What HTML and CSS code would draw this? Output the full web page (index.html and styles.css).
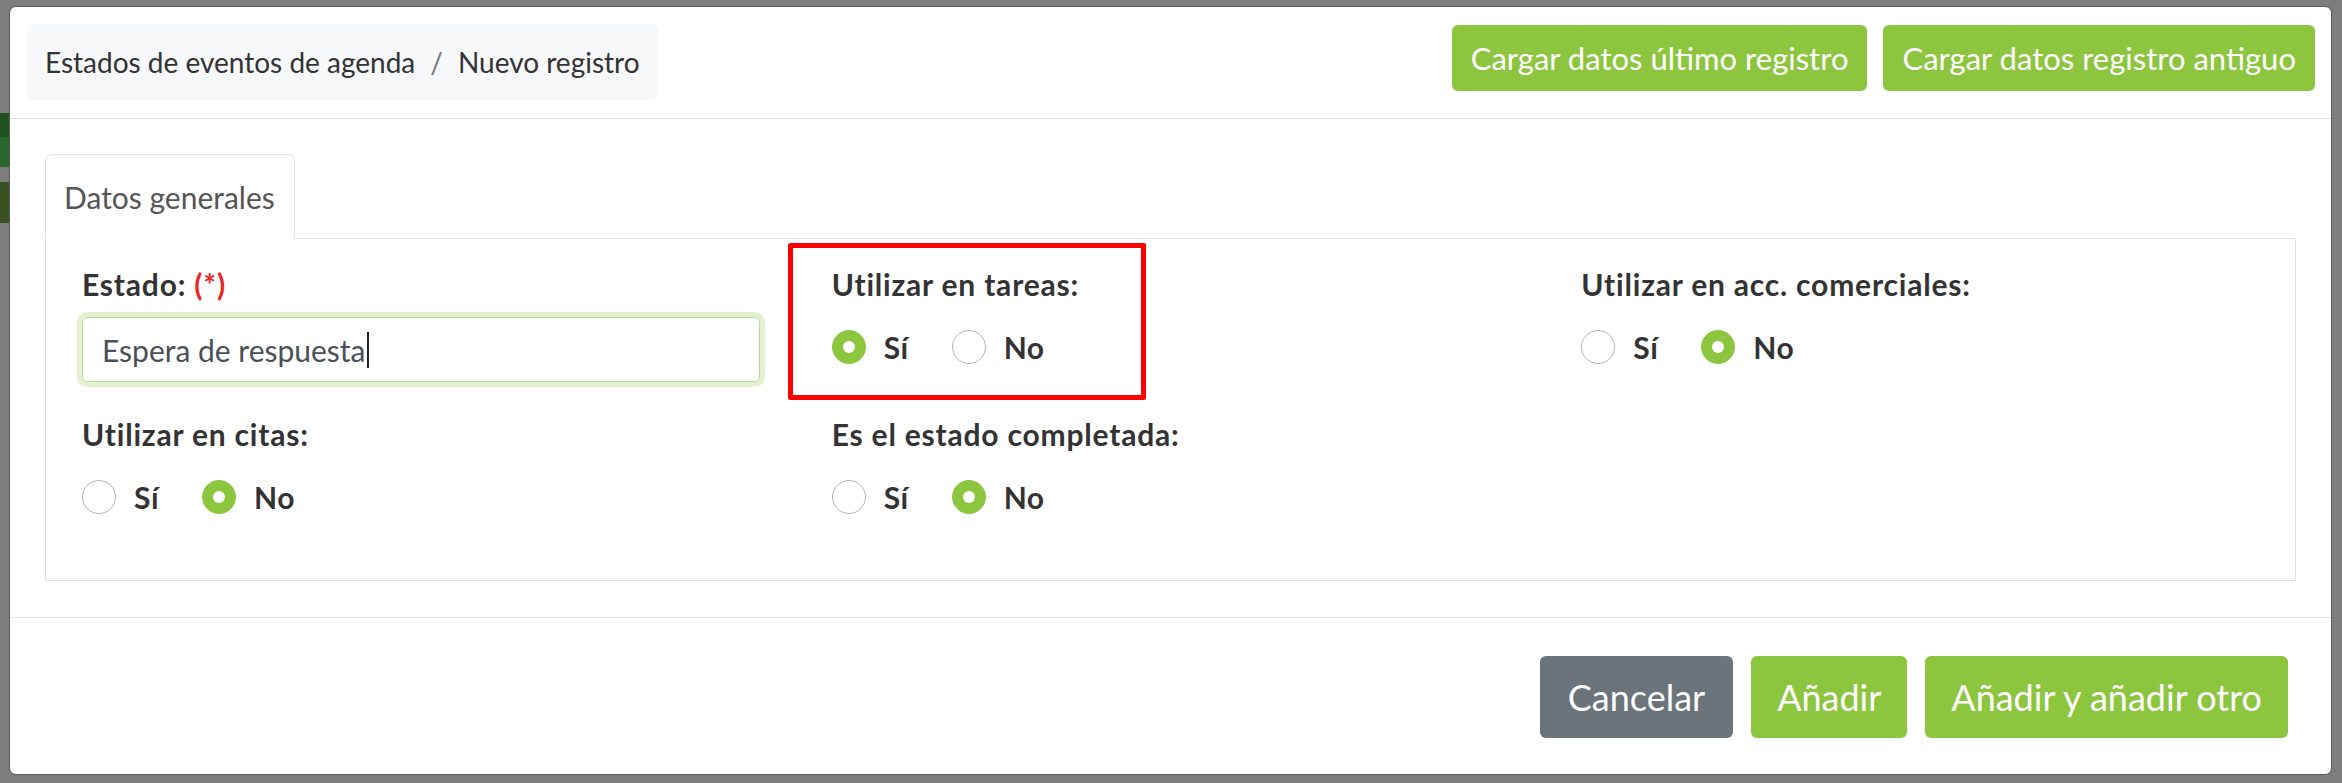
FILE: index.html
```html
<!DOCTYPE html>
<html lang="es">
<head>
<meta charset="utf-8">
<title>Nuevo registro</title>
<link rel="stylesheet" href="styles.css">
</head>
<body>
<div class="modal">
  <div class="modal-header">
    <nav class="crumbs">
      <span>Estados de eventos de agenda</span>
      <span class="sep">/</span>
      <span>Nuevo registro</span>
    </nav>
    <div class="header-actions">
      <button class="btn btn-green btn-top">Cargar datos último registro</button>
      <button class="btn btn-green btn-top">Cargar datos registro antiguo</button>
    </div>
  </div>
  <div class="modal-body">
    <div class="tabs">
      <div class="tab active">Datos generales</div>
    </div>
    <div class="tab-panel">
      <div class="field">
        <div class="label">Estado: <span class="req">(*)</span></div>
        <div class="input"><span>Espera de respuesta</span><span class="caret"></span></div>
      </div>
      <div class="field highlighted">
        <div class="label">Utilizar en tareas:</div>
        <div class="radios">
          <span class="opt"><span class="radio on"></span>Sí</span>
          <span class="opt"><span class="radio"></span>No</span>
        </div>
      </div>
      <div class="field">
        <div class="label">Utilizar en acc. comerciales:</div>
        <div class="radios">
          <span class="opt"><span class="radio"></span>Sí</span>
          <span class="opt"><span class="radio on"></span>No</span>
        </div>
      </div>
      <div class="field">
        <div class="label">Utilizar en citas:</div>
        <div class="radios">
          <span class="opt"><span class="radio"></span>Sí</span>
          <span class="opt"><span class="radio on"></span>No</span>
        </div>
      </div>
      <div class="field">
        <div class="label">Es el estado completada:</div>
        <div class="radios">
          <span class="opt"><span class="radio"></span>Sí</span>
          <span class="opt"><span class="radio on"></span>No</span>
        </div>
      </div>
    </div>
  </div>
  <div class="modal-footer">
    <button class="btn btn-gray btn-big btn-cancel">Cancelar</button>
    <button class="btn btn-green btn-big">Añadir</button>
    <button class="btn btn-green btn-big">Añadir y añadir otro</button>
  </div>
</div>
</body>
</html>
```

FILE: styles.css
```css
*, *::before, *::after { box-sizing: border-box; }
html, body { margin: 0; padding: 0; }
body {
  width: 2342px;
  height: 783px;
  overflow: hidden;
  background:
    linear-gradient(to bottom,
      transparent 113px, #1f5122 113px, #1f5122 137px,
      #27682c 137px, #27682c 167px, transparent 167px,
      transparent 182px, #3a5221 182px, #3a5221 223px, transparent 223px)
      no-repeat 0 0 / 9px 783px,
    #7d7d7d;
  font-family: Lato, "Open Sans", sans-serif;
  color: #333;
  padding: 6px 0 0 9px;
}
.modal {
  width: 2323px;
  height: 769px;
  background: #fff;
  border: 1px solid #5a5a5a;
  border-radius: 7px;
  display: flex;
  flex-direction: column;
}
.modal-header {
  display: flex;
  justify-content: space-between;
  align-items: flex-start;
  padding: 17px 16px 18px 17px;
  border-bottom: 1px solid #e2e5e9;
}
.crumbs {
  height: 76px;
  background: #f7f8fa;
  border-radius: 7px;
  display: flex;
  align-items: center;
  padding: 0 18px;
  font-size: 28px;
  color: #333;
}
.crumbs .sep { color: #777; padding: 0 15px; }
.header-actions { display: flex; gap: 16px; margin-top: 1px; }
.btn {
  border: 0;
  color: #fff;
  font-family: Lato, "Open Sans", sans-serif;
  border-radius: 6px;
  display: flex;
  align-items: center;
  justify-content: center;
  white-space: nowrap;
}
.btn-green { background: #8cc63f; }
.btn-gray { background: #6b737b; }
.btn-top { height: 66px; padding: 0 19px; font-size: 31px; }
.btn-big { height: 82px; padding: 0 26px; font-size: 36px; }
.btn-cancel { padding: 0 28px; }
.modal-body {
  padding: 35px 35px 36px 35px;
  border-bottom: 1px solid #e2e5e9;
}
.tabs { display: flex; border-bottom: 1px solid #dee2e6; }
.tab {
  height: 85px;
  margin-bottom: -1px;
  padding: 0 19px 0 18px;
  border: 1px solid #dee2e6;
  border-bottom-color: #fff;
  border-radius: 7px 7px 0 0;
  background: #fff;
  display: flex;
  align-items: center;
  font-size: 30px;
  color: #555;
}
.tab-panel {
  border: 1px solid #dee2e6;
  border-top: 0;
  display: grid;
  grid-template-columns: repeat(3, 1fr);
  row-gap: 37px;
  padding: 30px 0 66px;
}
.field { padding: 0 36px; }
.label {
  font-size: 30px;
  font-weight: 700;
  letter-spacing: 0.8px;
  line-height: 30px;
  height: 30px;
  margin-bottom: 18px;
  color: #333;
  white-space: nowrap;
}
.req { color: #e8272b; }
.input {
  height: 65px;
  border: 1px solid #b9dc8e;
  border-radius: 5px;
  box-shadow: 0 0 0 5px #e3f1d2;
  display: flex;
  align-items: center;
  padding: 0 19px;
  font-size: 30px;
  color: #495057;
}
.caret { width: 2px; height: 36px; background: #222; margin-left: 1px; }
.radios { display: flex; gap: 43px; padding-top: 13px; }
.opt {
  display: flex;
  align-items: center;
  gap: 18px;
  font-size: 30px;
  font-weight: 700;
  letter-spacing: 0.5px;
  line-height: 34px;
  color: #333;
}
.radio {
  width: 34px;
  height: 34px;
  border-radius: 50%;
  border: 1px solid #aeb5bd;
  background: #fff;
  position: relative;
}
.radio.on { background: #8cc63f; border-color: #8cc63f; }
.radio.on::after {
  content: "";
  position: absolute;
  left: 50%; top: 50%;
  width: 12px; height: 12px;
  margin: -6px 0 0 -6px;
  border-radius: 50%;
  background: #fff;
}
.highlighted { position: relative; }
.highlighted::before {
  content: "";
  position: absolute;
  left: -8px; top: -26px;
  width: 358px; height: 157px;
  border: 5px solid #f00;
  border-radius: 2px;
}
.modal-footer {
  flex: 1;
  display: flex;
  justify-content: flex-end;
  align-items: flex-start;
  gap: 18px;
  padding: 38px 43px 0 0;
}
```
